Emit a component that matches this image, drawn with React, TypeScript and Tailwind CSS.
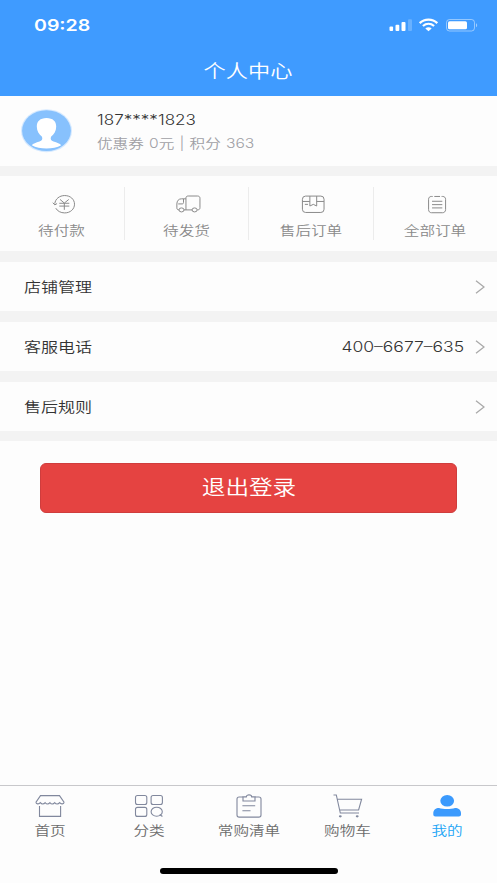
import React from 'react';
import { clsx } from 'clsx';

function StatusIcons() {
    return (
        <svg width="90" height="16" viewBox="0 0 90 16" fill="none">
            <rect x="0.5" y="9.6" width="3.6" height="4.4" rx="1" fill="#fff" />
            <rect x="6.5" y="7.8" width="3.8" height="6.2" rx="1" fill="#fff" />
            <rect x="12.5" y="5" width="4" height="9" rx="1" fill="#fff" />
            <rect x="19" y="2.2" width="4" height="11.8" rx="1" fill="#fff" fillOpacity="0.22" />
            <path d="M30.7 6.2C35.6 1.5 43.4 1.5 48.3 6.2" stroke="#fff" strokeWidth="2.3" />
            <path d="M33.9 9C37.2 6.1 41.8 6.1 45.1 9" stroke="#fff" strokeWidth="2.2" />
            <path d="M36.3 11.6C38.2 9.9 40.8 9.9 42.7 11.6L39.5 14.2Z" fill="#fff" />
            <rect x="57.5" y="2.5" width="28" height="11.5" rx="3" stroke="#fff" strokeOpacity="0.45" />
            <rect x="59" y="4.2" width="19" height="8.1" rx="1.6" fill="#fff" />
            <path d="M87 6.3C88.6 6.8 88.6 9.7 87 10.2Z" fill="#fff" fillOpacity="0.5" />
        </svg>
    );
}

function Avatar() {
    return (
        <svg width="52" height="44" viewBox="0 0 52 44">
            <ellipse cx="25.5" cy="21.7" rx="25.5" ry="21.5" fill="#d5e9ff" />
            <ellipse cx="25.5" cy="21.7" rx="24.4" ry="20.4" fill="#87c1fd" />
            <path
                d="M25.5 9C19 9 15.8 12.5 15.8 17.5C15.8 22 18 25.5 21 27.8C21.8 30.5 21 31.7 18.5 32.6C15 33.7 12 34.6 10.8 36.3C18.5 40.6 32.5 40.6 40.2 36.3C39 34.6 36 33.7 32.5 32.6C30 31.7 29.2 30.5 30 27.8C33 25.5 35.2 22 35.2 17.5C35.2 12.5 32 9 25.5 9Z"
                fill="#fff"
            />
        </svg>
    );
}

function Chevron() {
    return (
        <svg width="10" height="14" viewBox="0 0 10 14" fill="none" stroke="#a9a9a9" strokeWidth="1.3">
            <path d="M1 0.8L9 7L1 13.2" />
        </svg>
    );
}

const orders = [
    {
        label: '待付款',
        icon: (
            <>
                <path d="M2.8 10.7C3.3 5.5 7.9 1.7 13.7 1.7C20 1.7 24.5 5.9 24.5 11.2C24.5 16.6 20 20.8 13.7 20.8C9.4 20.8 5.6 18.8 3.9 15.6" />
                <path d="M0.6 9.6L2.9 12L5.3 10.5" />
                <path d="M8.6 6L13.3 10L18.2 6M13.3 10V17.4M7.8 10.2H18.8M7.8 13.3H18.8" />
            </>
        ),
    },
    {
        label: '待发货',
        icon: (
            <>
                <path d="M10.7 17.5V4.5C10.7 3 11.5 2.2 13.2 2.2H23.3C25 2.2 26.1 3 26.1 4.7V15C26.1 16.7 25.2 17.5 23.2 17.5M17.5 17.5H8.4M3.2 17.5C1.5 17.5 0.7 16.8 0.7 15.2V11C0.7 7.5 2.7 5.3 5.7 5.3H10.7" />
                <path d="M2.2 10.9H6.4C7.5 10.9 8 10.4 8 9.4V5.5" />
                <ellipse cx="5.8" cy="17.5" rx="2.8" ry="2.2" />
                <ellipse cx="20.2" cy="17.5" rx="2.8" ry="2.2" />
            </>
        ),
    },
    {
        label: '售后订单',
        icon: (
            <>
                <rect x="1.3" y="2.3" width="23.8" height="18" rx="3.5" />
                <path d="M1.3 8.2H9.5M17 8.2H25M9.5 2.3V13.2L13.3 11.4L17 13.2V2.3M4 11.4H7.5" />
            </>
        ),
    },
    {
        label: '全部订单',
        icon: (
            <>
                <path d="M8.2 2.7H6.7C4.8 2.7 3.7 4 3.7 5.8V17.2C3.7 19.2 4.9 20.6 7 20.6H19C21 20.6 22.4 19.2 22.4 17.2V5.8C22.4 4 21.2 2.7 19.2 2.7H18M10 2.7H16.3" />
                <path d="M7.5 8H18.8M7.5 11.7H18.8M7.5 15.3H18.8" />
            </>
        ),
    },
];

const rows = [
    { label: '店铺管理', value: '' },
    { label: '客服电话', value: '400–6677–635' },
    { label: '售后规则', value: '' },
];

const tabs = [
    {
        label: '首页',
        icon: (
            <>
                <path d="M5.5 1.6H24.5L29 8.2C29 10 26.2 10.6 24.7 8.7C23.2 10.5 21 10.5 19.8 8.7C18.3 10.5 16.2 10.5 15 8.7C13.5 10.5 11.5 10.5 10.2 8.7C8.7 10.5 6.7 10.5 5.3 8.7C3.8 10.6 1 10 1 8.2Z" />
                <path d="M4.5 12V22.4H25.6V12" />
            </>
        ),
    },
    {
        label: '分类',
        icon: (
            <>
                <rect x="1.5" y="1.5" width="11.3" height="9" rx="2" />
                <rect x="17.1" y="1.5" width="11.3" height="9" rx="2" />
                <rect x="1.5" y="13.4" width="11.3" height="9" rx="2" />
                <ellipse cx="22.7" cy="17.7" rx="5.6" ry="4.5" />
                <path d="M25.8 20.5L28.4 22.5" />
            </>
        ),
    },
    {
        label: '常购清单',
        icon: (
            <>
                <path d="M9 3H5.2C3.9 3 3 3.8 3 5V20.9C3 22.3 3.9 23.1 5.2 23.1H24.8C26.2 23.1 27 22.3 27 20.9V5C27 3.8 26.1 3 24.8 3H21" />
                <path d="M12.3 2.9C12.3 0.2 17.7 0.2 17.7 2.9H21V7H9V2.9Z" />
                <path d="M8.4 11.7H21.2M8.4 16.7H16.5" />
            </>
        ),
    },
    {
        label: '购物车',
        icon: (
            <>
                <path d="M0.5 1H3.3L7.3 19H26M4.3 5.2H28.6L25.6 16H6.6" />
                <ellipse cx="7.3" cy="22.3" rx="0.9" ry="0.6" />
                <ellipse cx="24.2" cy="22.3" rx="0.9" ry="0.6" />
            </>
        ),
    },
    {
        label: '我的',
        active: true,
        icon: (
            <g fill="#3b9afd" stroke="none">
                <ellipse cx="15.2" cy="6.8" rx="6.9" ry="5.8" />
                <path d="M1.3 19.2C1.3 15.6 4 13.9 7 13.9C11.5 15.3 18.5 15.3 23 13.9C26.2 13.9 29 15.6 29 19.2V20.5C29 21.7 28.2 22.4 26.8 22.4H3.5C2.1 22.4 1.3 21.7 1.3 20.5Z" />
            </g>
        ),
    },
];

export default function App() {
    return (
        <div className="flex h-[883px] w-[497px] flex-col overflow-hidden bg-[#fdfdfd] font-['Inter','Noto_Sans_CJK_SC',sans-serif] text-[#333]">
            <header className="h-24 shrink-0 bg-[#3f9bff] text-white">
                <div className="flex h-[50px] items-center justify-between pr-[18px] pl-[34px]">
                    <span className="origin-left scale-x-[1.22] text-[16px] font-semibold">09:28</span>
                    <StatusIcons />
                </div>
                <h1 className="text-center text-[18.5px] leading-[43px] font-[350]">
                    <span className="inline-block scale-x-120">个人中心</span>
                </h1>
            </header>

            <section className="flex h-[70px] shrink-0 items-center pl-[21px]">
                <Avatar />
                <div className="ml-6 flex flex-col whitespace-nowrap">
                    <span className="origin-left scale-x-[1.22] text-[14px] leading-[24px] font-[350]">187****1823</span>
                    <span className="origin-left scale-x-[1.2] text-[13px] leading-[22px] font-[350] [word-spacing:0.7px] text-[#a0a0a5]">优惠券 0元 | 积分 363</span>
                </div>
            </section>

            <section className="flex h-[96px] shrink-0 items-center border-t-10 border-b-11 border-[#f3f3f3]">
                {orders.map((order, i) => (
                    <div
                        key={order.label}
                        className={clsx('flex h-[53px] flex-1 flex-col items-center border-[#ececec] text-[#8a8a8a]', i < 3 && 'border-r')}
                    >
                        <svg className="mt-[7px] ml-[5px]" width="27" height="22" viewBox="0 0 27 22" fill="none" stroke="currentColor" strokeWidth="1.1">
                            {order.icon}
                        </svg>
                        <span className="mt-[6px] scale-x-120 text-[13px] leading-5 font-[350] whitespace-nowrap">{order.label}</span>
                    </div>
                ))}
            </section>

            {rows.map((row) => (
                <div key={row.label} className="flex h-[60px] shrink-0 items-center border-b-11 border-[#f3f3f3] pr-3 pl-6 last-of-type:h-[59px] last-of-type:border-b-10">
                    <span className="origin-left scale-x-120 text-[14.2px] font-[350]">{row.label}</span>
                    <span className="mr-[11px] ml-auto origin-right scale-x-[1.25] text-[14px] font-[350]">{row.value}</span>
                    <Chevron />
                </div>
            ))}

            <button className="mx-10 mt-[22px] h-[50px] shrink-0 rounded-md border border-[#cf3d3d] bg-[#e54341] text-[20px] font-[350] text-white">
                <span className="inline-block scale-x-[1.18]">退出登录</span>
            </button>

            <nav className="mt-auto flex h-[98px] shrink-0 flex-col items-center border-t border-[#c8c8cb]">
                <div className="flex w-full">
                    {tabs.map((tab) => (
                        <div key={tab.label} className="flex flex-1 flex-col items-center pt-2">
                            <svg width="30" height="24" viewBox="0 0 30 24" fill="none" stroke="#81889d" strokeWidth="1.1">
                                {tab.icon}
                            </svg>
                            <span className={clsx('mt-[2px] scale-x-120 text-[13px] leading-5 font-[350] whitespace-nowrap', tab.active ? 'text-[#22a5f5]' : 'text-[#6c6c6c]')}>
                                {tab.label}
                            </span>
                        </div>
                    ))}
                </div>
                <div className="mt-auto mb-[9px] h-[6px] w-[178px] rounded-full bg-black" />
            </nav>
        </div>
    );
}
